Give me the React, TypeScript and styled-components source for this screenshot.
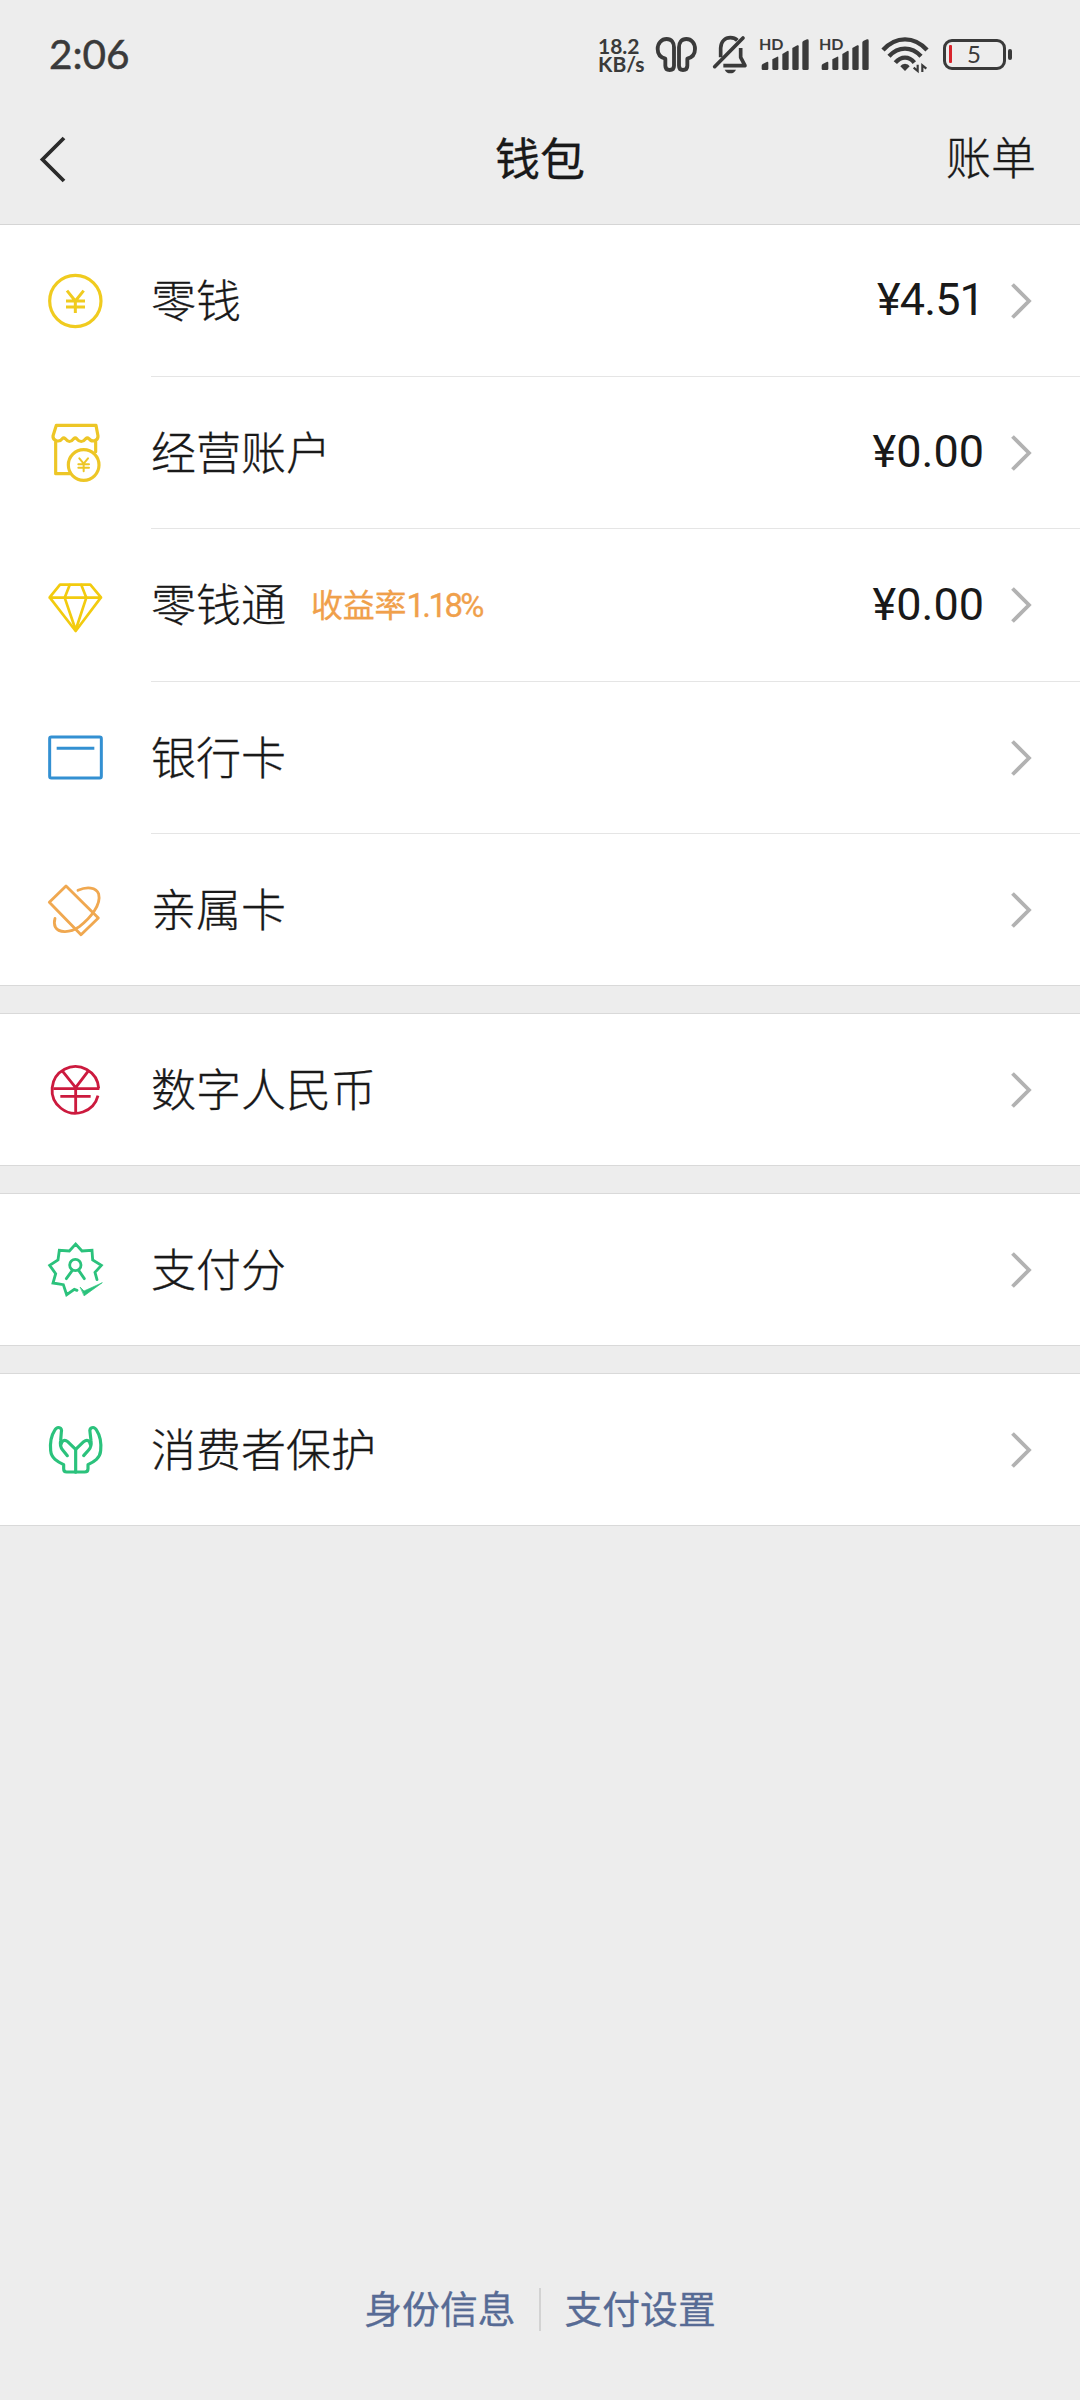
import React from "react";
import styled, { createGlobalStyle } from "styled-components";

const INK = "#3a3a3a";
const CJK = `"Noto Sans CJK SC", sans-serif`;

const GlobalStyle = createGlobalStyle`
  * { box-sizing: border-box; }
  html, body { margin: 0; padding: 0; background: #ededed; }
  body { font-family: ${CJK}; }
`;

const Screen = styled.div`
  width: 1080px;
  height: 2400px;
  display: flex;
  flex-direction: column;
  background: #ededed;
  color: #191919;
  overflow: hidden;
`;

const StatusBar = styled.div`
  height: 94px;
  padding: 20px 68px 4px 49px;
  display: flex;
  align-items: center;
  justify-content: space-between;
  color: ${INK};
  font-family: Lato, sans-serif;
`;

const Clock = styled.div`
  font-size: 40.5px;
  line-height: 66px;
  padding-bottom: 3px;
  font-weight: 400;
  -webkit-text-stroke: 0.5px ${INK};
`;

const StatusIcons = styled.div`
  display: flex;
  align-items: center;
  height: 70px;
`;

const NetSpeed = styled.div`
  width: 54px;
  font: 700 21px/18px Lato, sans-serif;
  white-space: nowrap;
`;

const Glyph = styled.svg<{ $w: number; $gap?: number }>`
  display: block;
  flex: none;
  width: ${(p) => p.$w}px;
  height: 70px;
  margin-right: ${(p) => p.$gap ?? 0}px;
`;

const SignalBox = styled.div<{ $gap: number }>`
  position: relative;
  width: 54px;
  margin-right: ${(p) => p.$gap}px;
`;

const HdBadge = styled.span`
  position: absolute;
  left: 1px;
  top: 16px;
  font: 700 16px/16px Lato, sans-serif;
`;

const Battery = styled.div`
  width: 63px;
  height: 31px;
  margin-left: 11px;
  margin-bottom: 2px;
  border: 3.5px solid ${INK};
  border-radius: 9px;
  display: flex;
  align-items: center;
  padding-left: 3px;
`;

const BatteryLevel = styled.div`
  width: 3px;
  height: 18px;
  border-radius: 1px;
  background: #d8242c;
`;

const BatteryText = styled.span`
  flex: 1;
  text-align: center;
  padding-right: 7px;
  font: 400 24px/24px Lato, sans-serif;
`;

const BatteryCap = styled.div`
  width: 4px;
  height: 11px;
  margin-left: 2px;
  margin-bottom: 2px;
  border-radius: 2px;
  background: ${INK};
`;

const NavBar = styled.header`
  height: 131px;
  display: grid;
  grid-template-columns: 1fr auto 1fr;
  align-items: center;
  padding: 0 44px 2px 38px;
  border-bottom: 1px solid #d5d5d5;
`;

const BackIcon = styled.svg`
  width: 30px;
  height: 50px;
  margin-top: 2px;
`;

const Title = styled.h1`
  margin: 0;
  font-size: 45px;
  line-height: 66px;
  font-weight: 400;
  -webkit-text-stroke: 0.3px #191919;
  padding: 0 0 3px 6px;
`;

const NavAction = styled.div`
  justify-self: end;
  font-size: 45px;
  line-height: 66px;
  font-weight: 300;
  -webkit-text-stroke: 0.3px #191919;
  padding-bottom: 4px;
`;

const Section = styled.section`
  background: #fff;
  border-bottom: 1px solid #d9d9d9;

  & + & {
    margin-top: 27px;
    border-top: 1px solid #d9d9d9;
  }
`;

const Row = styled.div`
  display: flex;
  align-items: stretch;
  height: 152px;
  padding-left: 45px;

  &:nth-child(3) {
    height: 153px;
  }

  &:last-child {
    height: 151px;
  }
`;

const IconSlot = styled.svg`
  width: 60px;
  height: 60px;
  align-self: center;
  flex: none;
  fill: none;
  stroke-linecap: round;
  stroke-linejoin: round;
`;

const RowBody = styled.div<{ $line: boolean }>`
  flex: 1;
  margin-left: 46px;
  padding-right: 47px;
  display: flex;
  align-items: center;
  border-bottom: ${(p) => (p.$line ? "1px solid #e5e5e5" : "none")};
`;

const Label = styled.span`
  font-size: 45px;
  line-height: 66px;
  font-weight: 300;
  -webkit-text-stroke: 0.3px #191919;
  padding-bottom: 4px;
`;

const Tag = styled.span`
  margin-left: 25px;
  font: 400 32px/48px ${CJK};
  color: #f0a04b;
  -webkit-text-stroke: 0.3px #f0a04b;
  letter-spacing: -0.2px;
  padding-bottom: 2px;
`;

const Rate = styled.span`
  font-family: Roboto, sans-serif;
  font-size: 33px;
  letter-spacing: -2.6px;
`;

const Amount = styled.span<{ $spacing: number }>`
  margin-left: auto;
  font: 400 45px/66px Roboto, sans-serif;
  letter-spacing: ${(p) => p.$spacing}px;
  padding-bottom: 1px;
`;

const Chevron = styled.svg`
  width: 24px;
  height: 40px;
  margin-left: 25px;
`;

const Spacer = styled.span`
  flex: 1;
`;

const Footer = styled.footer`
  margin-top: auto;
  height: 182px;
  display: flex;
  align-items: center;
  justify-content: center;
  color: #576b95;
  font-size: 37.8px;
  line-height: 56px;
`;

const FooterLink = styled.span`
  padding-bottom: 4px;
  -webkit-text-stroke: 0.3px #576b95;
`;

const FooterDivider = styled.i`
  width: 2px;
  height: 43px;
  margin: 0 23.5px;
  background: #d3d3d3;
`;

const icons: Record<string, React.ReactNode> = {
  change: (
    <IconSlot viewBox="45 46 180 180" stroke="#f0cb1f">
      <circle cx="136" cy="136" r="77" strokeWidth="9.5" />
      <path
        d="M111 105 L136 136 L161 105 M136 134 V172 M108 136 H165 M108 154 H165"
        strokeWidth="9"
        strokeLinecap="butt"
      />
    </IconSlot>
  ),
  business: (
    <IconSlot viewBox="45 54 180 180" stroke="#edc626" strokeWidth="9.5">
      <path d="M79 61 H198 L204 93 C205 108 184 113 177 101 Q172 97 167 101 Q154 118 140 101 Q136 97 131 101 Q118 118 106 101 Q101 97 97 101 C88 114 68 107 69 93 Z" />
      <path d="M77 111 V206 H122 M197 111 V140" />
      <circle cx="161" cy="180" r="46" />
      <path d="M148 160 L161 176 L174 160 M161 176 V199 M145 178 H177 M145 188 H177" strokeWidth="6" />
    </IconSlot>
  ),
  fund: (
    <IconSlot viewBox="45 48 180 180" stroke="#f2cb0f" strokeWidth="8">
      <path d="M90 74 H181 L213 112 L137 213 L59 112 Z M59 113 H213" />
      <path d="M119 75 L104 113 L137 210 L169 113 L154 75" />
    </IconSlot>
  ),
  card: (
    <IconSlot viewBox="45 504 180 180" stroke="#3390d2" strokeWidth="9">
      <rect x="59" y="531" width="155" height="123" rx="5" />
      <path d="M80 565 H193" strokeLinecap="butt" />
    </IconSlot>
  ),
  family: (
    <IconSlot viewBox="45 59 180 180" stroke="#f0a850" strokeWidth="8.5">
      <path d="M108 77 L58 126 L153 223 L205 173 Z" />
      <path d="M144 90 C170 78 199 80 206 101 C214 132 183 172 148 199 C118 220 85 217 76 200 C72 192 73 181 75 174" />
    </IconSlot>
  ),
  ecny: (
    <IconSlot viewBox="45 598 180 180" stroke="#cc1a3e" strokeWidth="8.5">
      <path d="M206 683 A70 70 0 1 0 204 705" strokeLinecap="butt" />
      <path d="M70 684 H208 M91 707 H182 M137 684 V757 M98 632 L137 681 L174 632" strokeLinecap="butt" />
    </IconSlot>
  ),
  score: (
    <IconSlot viewBox="45 59 180 180" stroke="#2bc27c" strokeWidth="8.5">
      <path
        d="M141 210 L133 207 L110 223 L100 193 L69 188 L77 160 L59 135 L84 119 L88 90 L118 92 L137 71 L156 92 L186 90 L188 119 L214 135 L195 156 L201 178"
        strokeLinejoin="miter"
      />
      <circle cx="136" cy="134" r="17" />
      <path d="M127 150 L109 175 M146 150 L163 175" />
      <path d="M151 201 L162 212 L217 187 L163 226 Z" fill="#2bc27c" strokeWidth="2" />
    </IconSlot>
  ),
  protect: (
    <IconSlot viewBox="45 599 180 180" stroke="#2bc27c" strokeWidth="9.5">
      <path d="M137 755 H110 Q101 755 101 745 V733 C82 724 64 714 62 691 C60 668 64 645 74 630 C82 616 98 621 94 635 L92 661 C89 675 91 681 98 689 L112 706" />
      <path d="M93 672 C97 658 106 658 113 664 L137 687 V755" />
      <path d="M137 755 H164 Q174 755 174 745 V733 C193 724 210 714 212 691 C214 668 210 645 200 630 C192 616 177 621 180 635 L183 661 C185 675 183 681 176 689 L161 706" />
      <path d="M181 672 C178 658 169 658 161 664 L137 687" />
    </IconSlot>
  ),
};

function Signal({ gap }: { gap: number }) {
  return (
    <SignalBox $gap={gap}>
      <HdBadge>HD</HdBadge>
      <Glyph $w={54} viewBox="534 0 162 210" fill={INK}>
        <path d="M545 137 Q545 134 548 132 L560 126 Q565 124 565 129 V146 Q565 150 561 150 H549 Q545 150 545 146Z" />
        <path d="M577 118 L592 110 Q595 109 595 113 V146 Q595 150 591 150 H581 Q577 150 577 146Z" />
        <path d="M607 102 L622 93 Q626 91 626 96 V146 Q626 150 622 150 H611 Q607 150 607 146Z" />
        <path d="M637 84 L652 76 Q656 74 656 79 V146 Q656 150 652 150 H641 Q637 150 637 146Z" />
        <path d="M667 68 Q667 64 671 62 L681 58 Q686 57 686 62 V146 Q686 150 682 150 H671 Q667 150 667 146Z" />
      </Glyph>
    </SignalBox>
  );
}

type Item = {
  icon: string;
  label: string;
  tag?: { text: string; rate: string };
  amount?: string;
  spacing?: number;
};

const sections: Item[][] = [
  [
    { icon: "change", label: "零钱", amount: "¥4.51", spacing: -0.9 },
    { icon: "business", label: "经营账户", amount: "¥0.00" },
    { icon: "fund", label: "零钱通", tag: { text: "收益率", rate: "1.18%" }, amount: "¥0.00" },
    { icon: "card", label: "银行卡" },
    { icon: "family", label: "亲属卡" },
  ],
  [{ icon: "ecny", label: "数字人民币" }],
  [{ icon: "score", label: "支付分" }],
  [{ icon: "protect", label: "消费者保护" }],
];

export default function App() {
  return (
    <Screen>
      <GlobalStyle />
      <StatusBar>
        <Clock>2:06</Clock>
        <StatusIcons>
          <NetSpeed>
            18.2
            <br />
            KB/s
          </NetSpeed>
          <Glyph $w={48} $gap={10} viewBox="216 0 144 210" fill="none" stroke={INK} strokeWidth="11.5" strokeLinejoin="round">
            <path d="M256 116 C240 112 233 101 233 87 C233 69 245 57 260 57 C275 57 282 68 282 82 V137 Q282 150 269 150 Q256 150 256 137 Z" />
            <path d="M322 116 C338 112 345 101 345 87 C345 69 334 57 319 57 C304 57 297 68 297 82 V137 Q297 150 309 150 Q322 150 322 137 Z" />
          </Glyph>
          <Glyph $w={40} $gap={8} viewBox="390 0 120 210" fill="none" stroke={INK} strokeWidth="11" strokeLinecap="round" strokeLinejoin="round">
            <path d="M404 140 L489 54" />
            <path d="M422 112 V84 C423 63 436 53 451 53 C460 53 467 56 472 61" strokeLinecap="butt" />
            <path d="M482 84 V112 L495 137 H430" strokeLinecap="butt" />
            <path d="M434 149 H468 Q463 160 451 160 Q439 160 434 149Z" fill={INK} stroke="none" />
          </Glyph>
          <Signal gap={6} />
          <Signal gap={8} />
          <Glyph $w={52} viewBox="240 0 156 210" fill="none" stroke={INK} strokeWidth="13">
            <path d="M249 90 Q278 58 315 58 Q352 58 381 90" />
            <path d="M267 109 Q288 86 315 86 Q342 86 363 109" />
            <path d="M286 128 Q299 113 315 113 Q331 113 343 128" />
            <path d="M315 131 Q325 131 329 139 L315 153 L301 139 Q305 131 315 131Z" fill={INK} stroke="none" />
            <path d="M353 134 V153 L341 143 M367 156 V136 L379 146" strokeWidth="6.5" />
          </Glyph>
          <Battery>
            <BatteryLevel />
            <BatteryText>5</BatteryText>
          </Battery>
          <BatteryCap />
        </StatusIcons>
      </StatusBar>
      <NavBar>
        <BackIcon viewBox="0 0 30 50" fill="none" stroke="#2b2b2b" strokeWidth="3.8">
          <path d="M26 4 L4.5 25.5 L26 47" />
        </BackIcon>
        <Title>钱包</Title>
        <NavAction>账单</NavAction>
      </NavBar>
      {sections.map((items, i) => (
        <Section key={i}>
          {items.map((item, j) => (
            <Row key={item.label}>
              {icons[item.icon]}
              <RowBody $line={j < items.length - 1}>
                <Label>{item.label}</Label>
                {item.tag && (
                  <Tag>
                    {item.tag.text}
                    <Rate>{item.tag.rate}</Rate>
                  </Tag>
                )}
                {item.amount ? <Amount $spacing={item.spacing ?? 0}>{item.amount}</Amount> : <Spacer />}
                <Chevron viewBox="0 0 24 40" fill="none" stroke="#b2b2b2" strokeWidth="3.8">
                  <path d="M3.5 3.5 L20 20 L3.5 36.5" />
                </Chevron>
              </RowBody>
            </Row>
          ))}
        </Section>
      ))}
      <Footer>
        <FooterLink>身份信息</FooterLink>
        <FooterDivider />
        <FooterLink>支付设置</FooterLink>
      </Footer>
    </Screen>
  );
}
